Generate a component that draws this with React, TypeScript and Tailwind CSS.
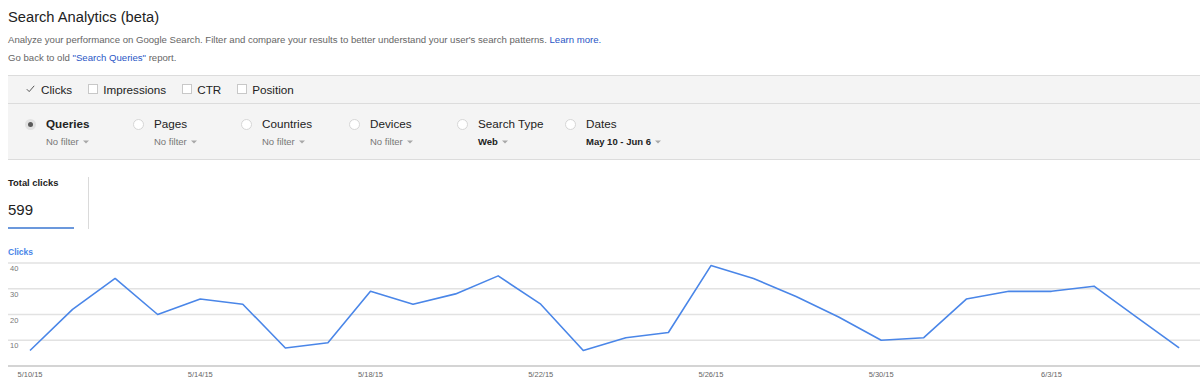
import React from 'react';

const clicks = [6, 22, 34, 20, 26, 24, 7, 9, 29, 24, 28, 35, 24, 6, 11, 13, 39, 34, 27, 19, 10, 11, 26, 29, 29, 31, 19, 7];
const dateLabels = ['5/10/15', '5/14/15', '5/18/15', '5/22/15', '5/26/15', '5/30/15', '6/3/15'];

const X0 = 22;
const STEP = 42.56;
const BASE = 108;
const UNIT = 2.575;

function Caret() {
  return (
    <svg width="6" height="4" viewBox="0 0 6 4" className="ml-[4px] inline-block">
      <path d="M0 0.5 L6 0.5 L3 3.5 Z" fill="#a8a8a8" />
    </svg>
  );
}

function Checkbox({ label }: { label: string }) {
  return (
    <div className="flex items-center gap-[5px]">
      <span className="h-[10px] w-[10px] border border-[#c8c8c8] bg-white" />
      <span>{label}</span>
    </div>
  );
}

function Dimension({ label, value, selected, bold }: { label: string; value: string; selected?: boolean; bold?: boolean }) {
  return (
    <div className="flex w-[108px] items-start">
      <span
        className={
          selected
            ? 'mt-[2px] flex h-[11px] w-[11px] shrink-0 items-center justify-center rounded-full bg-[#e2e2e2]'
            : 'mt-[2px] h-[11px] w-[11px] shrink-0 rounded-full border border-[#d6d6d6] bg-white'
        }
      >
        {selected && <span className="h-[5px] w-[5px] rounded-full bg-[#5a5a5a]" />}
      </span>
      <div className="ml-[10px]">
        <div className={selected ? 'text-[11.7px] font-bold leading-[14px] text-[#222]' : 'text-[11.7px] leading-[14px] text-[#222]'}>{label}</div>
        <div className={bold ? 'mt-[5px] flex items-center text-[9.5px] font-bold leading-[12px] text-[#222]' : 'mt-[5px] flex items-center text-[9.5px] leading-[12px] text-[#777]'}>
          {value}
          <Caret />
        </div>
      </div>
    </div>
  );
}

function ClicksChart() {
  const pts = clicks.map((v, i) => `${X0 + i * STEP},${BASE - v * UNIT}`).join(' ');
  return (
    <svg width="1192" height="124" viewBox="0 0 1192 124" className="block">
      {[40, 30, 20, 10].map((v) => (
        <g key={v}>
          <line x1="0" x2="1192" y1={BASE - v * UNIT} y2={BASE - v * UNIT} stroke="#e2e2e2" strokeWidth="1.5" />
          <text x="2" y={BASE - v * UNIT + 8} fontSize="7.5" fill="#777" fontFamily="Liberation Sans, Arial, sans-serif">
            {v}
          </text>
        </g>
      ))}
      <line x1="0" x2="1192" y1={BASE} y2={BASE} stroke="#a9a9a9" strokeWidth="1.2" />
      <polyline points={pts} fill="none" stroke="#4a86e8" strokeWidth="1.6" strokeLinejoin="round" />
      {dateLabels.map((d, i) => (
        <text key={d} x={X0 + i * 4 * STEP} y="119" fontSize="7.5" fill="#666" textAnchor="middle" fontFamily="Liberation Sans, Arial, sans-serif">
          {d}
        </text>
      ))}
    </svg>
  );
}

export default function App() {
  return (
    <div className="h-[383px] w-[1200px] overflow-hidden bg-white pl-2 font-['Liberation_Sans',Arial,sans-serif]">
      <h1 className="pt-[8px] text-[14.7px] leading-[18px] text-[#222]">Search Analytics (beta)</h1>
      <p className="mt-[8px] text-[9.6px] leading-[12px] text-[#666]">
        Analyze your performance on Google Search. Filter and compare your results to better understand your user's search patterns.{' '}
        <a className="text-[#2a56c6]">Learn more.</a>
      </p>
      <p className="mt-[6px] text-[9.6px] leading-[12px] text-[#666]">
        Go back to old <a className="text-[#2a56c6]">"Search Queries"</a> report.
      </p>

      <div className="mt-[11px] border-y border-[#dcdcdc] bg-[#f4f4f4]">
        <div className="flex h-[28px] items-center gap-[16px] border-b border-[#dcdcdc] pl-[18px] text-[11.7px] text-[#222]">
          <div className="flex items-center gap-[6px]">
            <svg width="9" height="8" viewBox="0 0 9 8">
              <path d="M0.8 4.2 L3.2 6.6 L8.2 0.8" fill="none" stroke="#555" strokeWidth="1" />
            </svg>
            <span>Clicks</span>
          </div>
          <Checkbox label="Impressions" />
          <Checkbox label="CTR" />
          <Checkbox label="Position" />
        </div>
        <div className="flex h-[55px] pl-[17px] pt-[13px]">
          <Dimension label="Queries" value="No filter" selected />
          <Dimension label="Pages" value="No filter" />
          <Dimension label="Countries" value="No filter" />
          <Dimension label="Devices" value="No filter" />
          <Dimension label="Search Type" value="Web" bold />
          <Dimension label="Dates" value="May 10 - Jun 6" bold />
        </div>
      </div>

      <div className="mt-[17px] flex">
        <div className="w-[81px] border-r border-[#dadada]">
          <div className="text-[9.4px] font-bold leading-[12px] text-[#222]">Total clicks</div>
          <div className="mt-[12px] text-[15px] leading-[18px] text-[#222]">599</div>
          <div className="mt-[8px] h-[2px] w-[66px] bg-[#6b98dc]" />
        </div>
      </div>

      <div className="mt-[17px] text-[8.5px] font-bold leading-[12px] text-[#4a86e8]">Clicks</div>
      <ClicksChart />
    </div>
  );
}
